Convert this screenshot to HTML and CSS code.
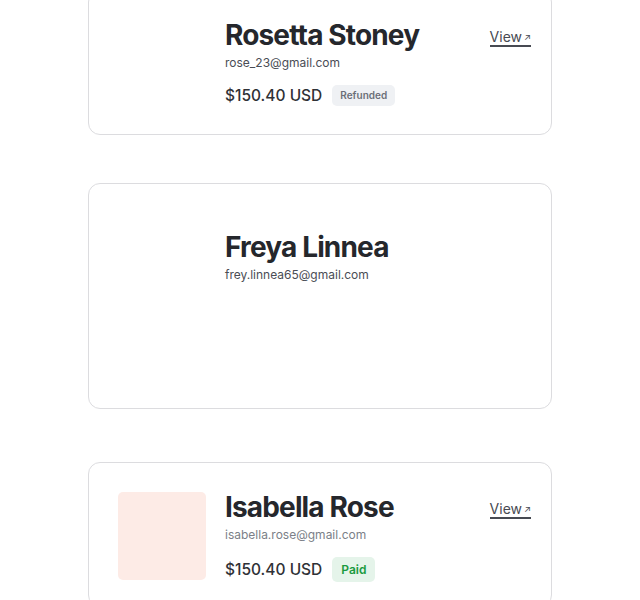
FILE: index.html
```html
<!DOCTYPE html>
<html lang="en">
<head>
<meta charset="utf-8">
<title>Orders</title>
<link rel="stylesheet" href="styles.css">
</head>
<body>
<main class="list">
  <article class="card card-first">
    <div class="thumb thumb-empty"></div>
    <div class="info">
      <h2 class="name">Rosetta Stoney</h2>
      <p class="email">rose_23@gmail.com</p>
      <div class="price-row">
        <span class="price">$150.40 USD</span>
        <span class="badge badge-refunded">Refunded</span>
      </div>
    </div>
    <a class="view" href="#">View<span class="arrow">↗</span></a>
  </article>

  <article class="card card-tall">
    <div class="thumb thumb-empty"></div>
    <div class="info">
      <h2 class="name">Freya Linnea</h2>
      <p class="email">frey.linnea65@gmail.com</p>
    </div>
  </article>

  <article class="card card-last">
    <div class="thumb thumb-rose"></div>
    <div class="info">
      <h2 class="name">Isabella Rose</h2>
      <p class="email email-light">isabella.rose@gmail.com</p>
      <div class="price-row">
        <span class="price">$150.40 USD</span>
        <span class="badge badge-paid">Paid</span>
      </div>
    </div>
    <a class="view" href="#">View<span class="arrow">↗</span></a>
  </article>
</main>
</body>
</html>
```

FILE: styles.css
```css
* { box-sizing: border-box; }
html, body { margin: 0; padding: 0; background: #fff; }
body {
  font-family: Inter, "Noto Sans", sans-serif;
  color: #24262b;
  overflow: hidden;
}
.list {
  width: 464px;
  margin: 0 auto;
  display: flex;
  flex-direction: column;
}
.card {
  display: flex;
  align-items: flex-start;
  gap: 19px;
  padding: 29px 20px 26px 29px;
  border: 1px solid #dcdcdf;
  border-radius: 12px;
  background: #fff;
}
.card-first { margin-top: -10px; height: 145px; }
.card-tall { margin-top: 48px; height: 226px; padding-top: 48px; }
.card-last { margin-top: 53px; height: 145px; }
.thumb {
  width: 88px;
  height: 88px;
  flex: none;
  border-radius: 5px;
}
.thumb-empty { background: transparent; }
.thumb-rose { background: #fdebe6; }
.info { flex: 1; min-width: 0; }
.name {
  margin: -2px 0 0;
  font-size: 28px;
  line-height: 34px;
  font-weight: 700;
  letter-spacing: -0.85px;
  color: #25272c;
}
.email {
  margin: 2px 0 0;
  font-size: 12px;
  line-height: 18px;
  color: #4a4d55;
}
.email-light { color: #7b7f88; }
.price-row {
  display: flex;
  align-items: center;
  gap: 10px;
  margin-top: 13px;
}
.price {
  font-size: 15.5px;
  font-weight: 500;
  color: #2f3136;
}
.badge {
  font-size: 10px;
  font-weight: 600;
  line-height: 13px;
  padding: 4px 8px;
  border-radius: 5px;
}
.badge-refunded { background: #eff1f4; color: #6b6f78; }
.badge-paid { background: #e5f4ea; color: #1a9a3e; font-size: 12px; line-height: 15px; padding: 5px 9px; }
.view {
  margin-top: 9px;
  font-size: 14px;
  line-height: 16px;
  color: #474a52;
  text-decoration: none;
  border-bottom: 2px solid #474a52;
  padding-bottom: 0;
  display: flex;
  align-items: flex-start;
  gap: 2px;
}
.arrow { font-size: 9px; line-height: 12px; margin-top: 2px; }
```
